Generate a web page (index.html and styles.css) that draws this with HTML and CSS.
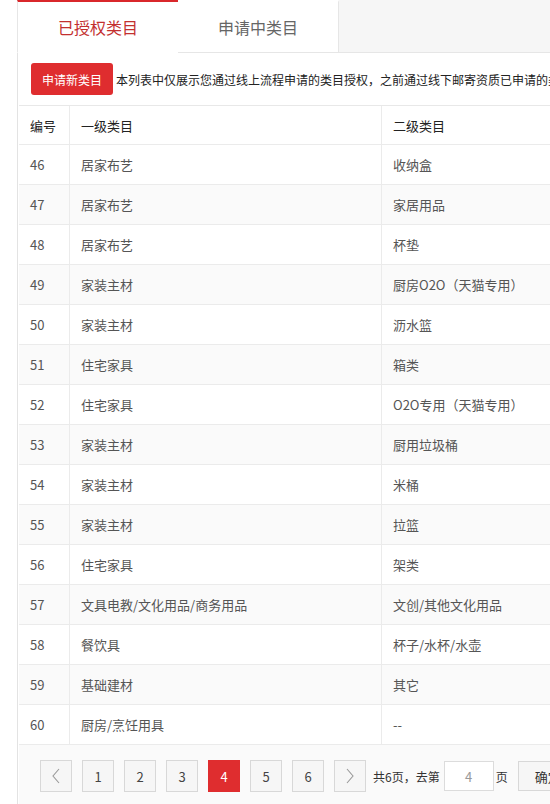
FILE: index.html
```html
<!DOCTYPE html>
<html lang="zh">
<head>
<meta charset="utf-8">
<link rel="stylesheet" href="styles.css">
</head>
<body>
<div class="page">
  <div class="tabs">
    <div class="tab active">已授权类目</div>
    <div class="tab">申请中类目</div>
    <div class="tab-fill"></div>
  </div>
  <div class="panel">
    <div class="toolbar">
      <button class="btn-apply">申请新类目</button>
      <span class="note">本列表中仅展示您通过线上流程申请的类目授权，之前通过线下邮寄资质已申请的类目</span>
    </div>
    <table class="grid">
      <thead>
        <tr><th class="c-no">编号</th><th class="c-l1">一级类目</th><th class="c-l2">二级类目</th><th class="c-op"></th></tr>
      </thead>
      <tbody>
        <tr><td>46</td><td>居家布艺</td><td>收纳盒</td><td></td></tr>
        <tr><td>47</td><td>居家布艺</td><td>家居用品</td><td></td></tr>
        <tr><td>48</td><td>居家布艺</td><td>杯垫</td><td></td></tr>
        <tr><td>49</td><td>家装主材</td><td>厨房O2O（天猫专用）</td><td></td></tr>
        <tr><td>50</td><td>家装主材</td><td>沥水篮</td><td></td></tr>
        <tr><td>51</td><td>住宅家具</td><td>箱类</td><td></td></tr>
        <tr><td>52</td><td>住宅家具</td><td>O2O专用（天猫专用）</td><td></td></tr>
        <tr><td>53</td><td>家装主材</td><td>厨用垃圾桶</td><td></td></tr>
        <tr><td>54</td><td>家装主材</td><td>米桶</td><td></td></tr>
        <tr><td>55</td><td>家装主材</td><td>拉篮</td><td></td></tr>
        <tr><td>56</td><td>住宅家具</td><td>架类</td><td></td></tr>
        <tr><td>57</td><td>文具电教/文化用品/商务用品</td><td>文创/其他文化用品</td><td></td></tr>
        <tr><td>58</td><td>餐饮具</td><td>杯子/水杯/水壶</td><td></td></tr>
        <tr><td>59</td><td>基础建材</td><td>其它</td><td></td></tr>
        <tr><td>60</td><td>厨房/烹饪用具</td><td>--</td><td></td></tr>
      </tbody>
    </table>
    <div class="pager">
      <span class="pg arrow">
        <svg width="10" height="16" viewBox="0 0 10 16"><path d="M8 1 L2 8 L8 15" fill="none" stroke="#999" stroke-width="1.1"/></svg>
      </span>
      <span class="pg">1</span>
      <span class="pg">2</span>
      <span class="pg">3</span>
      <span class="pg current">4</span>
      <span class="pg">5</span>
      <span class="pg">6</span>
      <span class="pg arrow">
        <svg width="10" height="16" viewBox="0 0 10 16"><path d="M2 1 L8 8 L2 15" fill="none" stroke="#999" stroke-width="1.1"/></svg>
      </span>
      <span class="total">共6页，去第</span>
      <input class="jump" type="text" value="4">
      <span class="unit">页</span>
      <button class="go">确定</button>
    </div>
  </div>
</div>
</body>
</html>
```

FILE: styles.css
```css
html, body {
  margin: 0;
  padding: 0;
  overflow: hidden;
  background: #fff;
}
body {
  font-family: "Noto Sans CJK SC", "Noto Sans", sans-serif;
  color: #333;
}
.page {
  margin-left: 17px;
  width: 1000px;
}
.tabs {
  display: flex;
  height: 53px;
}
.tab {
  width: 161px;
  box-sizing: border-box;
  display: flex;
  align-items: center;
  justify-content: center;
  font-size: 16px;
  color: #666;
  background: #fff;
  border-top: 2px solid transparent;
  border-bottom: 1px solid #e6e6e6;
  border-right: 1px solid #e6e6e6;
}
.tab.active {
  color: #c3302f;
  border-top-color: #d9272b;
  border-left: 1px solid #e6e6e6;
  border-bottom-color: #fff;
  border-right: none;
}
.tab-fill {
  flex: 1;
  background: #f6f6f6;
  border-bottom: 1px solid #e6e6e6;
}
.panel {
  border-left: 1px solid #e3e3e3;
  padding-left: 1px;
}
.toolbar {
  display: flex;
  align-items: center;
  height: 53px;
  padding-left: 12px;
  box-sizing: border-box;
  white-space: nowrap;
  overflow: hidden;
  border-bottom: 1px solid #e8e8e8;
}
.btn-apply {
  width: 82px;
  height: 32px;
  border: none;
  border-radius: 3px;
  background: #df2d2f;
  color: #fff;
  font-family: inherit;
  font-size: 12px;
  padding: 0;
  margin-right: 3px;
  flex: none;
}
.note {
  font-size: 12px;
  color: #222;
}
.grid {
  border-collapse: collapse;
  table-layout: fixed;
  width: 980px;
  font-size: 13px;
}
.grid th, .grid td {
  text-align: left;
  padding: 0 11px;
  border-bottom: 1px solid #ebebeb;
  border-right: 1px solid #ebebeb;
  white-space: nowrap;
}
.grid th {
  height: 38px;
  font-weight: 400;
  color: #222;
}
.grid td {
  height: 39px;
  color: #555;
}
.grid tbody tr:nth-child(even) {
  background: #fafafa;
}
.c-no { width: 28px; }
.c-l1 { width: 289px; }
.c-l2 { width: 289px; }
.pager {
  display: flex;
  align-items: center;
  background: #fafafa;
  padding: 15px 0 20px 21px;
  font-size: 12px;
  color: #333;
}
.pg {
  width: 30px;
  height: 30px;
  border: 1px solid #d8d8d8;
  background: #f6f6f6;
  display: flex;
  align-items: center;
  justify-content: center;
  margin-right: 10px;
  color: #444;
  font-size: 13px;
  flex: none;
}
.pg.current {
  background: #df2d2f;
  border-color: #df2d2f;
  color: #fff;
}
.total {
  margin-left: -3px;
}
.jump {
  width: 48px;
  height: 28px;
  border: 1px solid #dcdcdc;
  background: #fff;
  margin: 0 2px 0 4px;
  padding: 0;
  text-align: center;
  color: #999;
  font-family: inherit;
  font-size: 13px;
  flex: none;
}
.unit {
  margin-right: 10px;
}
.go {
  height: 30px;
  width: 60px;
  border: 1px solid #d8d8d8;
  background: #f6f6f6;
  font-family: inherit;
  font-size: 13px;
  color: #333;
  padding: 0;
  flex: none;
}
```
